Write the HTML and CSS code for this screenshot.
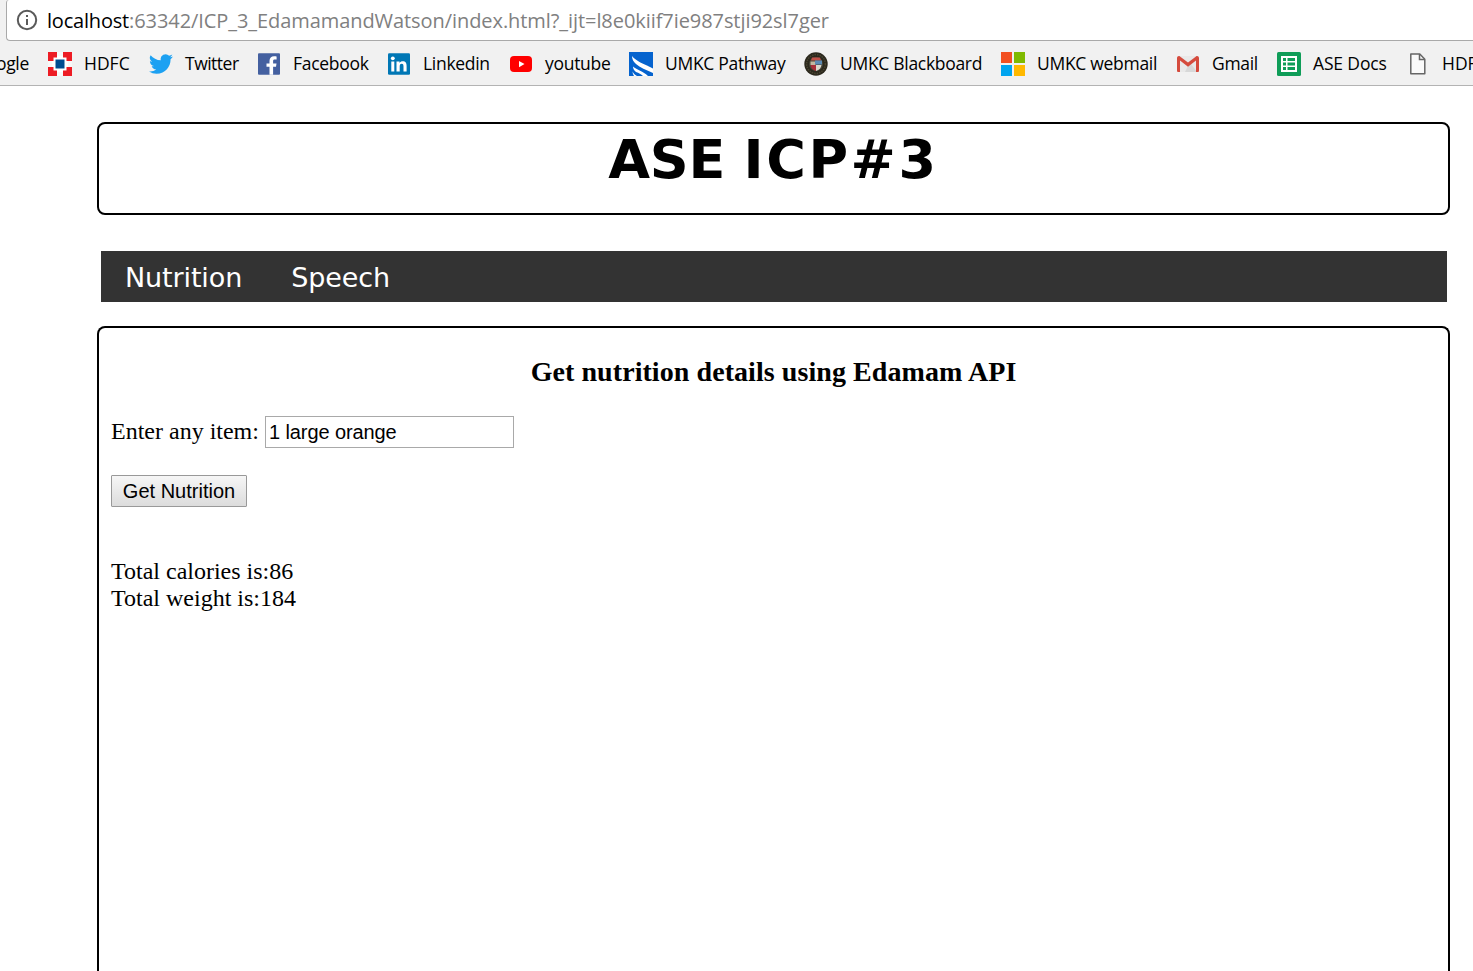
FILE: index.html
```html
<!DOCTYPE html>
<html lang="en">
<head>
<meta charset="utf-8">
<title>ASE ICP#3</title>
<link rel="stylesheet" href="styles.css">
</head>
<body>
<div class="chrome">
  <div class="address">
    <svg class="info" viewBox="0 0 22 22"><circle cx="11" cy="11" r="9.2" fill="none" stroke="#5a5a5a" stroke-width="2"/><path d="M10 10h2v6h-2zM10 6h2v2h-2z" fill="#5a5a5a"/></svg>
    <span class="url"><span class="host">localhost</span>:63342/ICP_3_EdamamandWatson/index.html?_ijt=l8e0kiif7ie987stji92sl7ger</span>
  </div>
  <div class="bookmarks">
    <div class="bm cut"><span class="t-google">Google</span></div>
    <div class="bm"><svg viewBox="0 0 24 24"><path fill="#ed1c24" d="M0 0h24v24H0z"/><path fill="#f8f8f8" d="M9 0h6v4H9zM9 20h6v4H9zM0 9h4v6H0zM20 9h4v6h-4z"/><path fill="#fff" d="M4 4h16v16H4z"/><path fill="#ed1c24" d="M4 4h5v1.500H5.500V9H4zM15 4h5v5h-1.500V5.500H15zM4 15h1.500v3.500H9V20H4zM18.500 15H20v5h-5v-1.500h3.500z"/><path fill="#004c8f" d="M7.500 7.500h9v9h-9z"/></svg><span class="t-hdfc">HDFC</span></div>
    <div class="bm"><svg viewBox="0 0 24 24"><path fill="#1da1f2" d="M23.950 4.570a10 10 0 0 1-2.820.770 4.960 4.960 0 0 0 2.160-2.720c-.950.560-2 .960-3.130 1.190a4.920 4.920 0 0 0-8.380 4.480C7.690 8.100 4.070 6.130 1.640 3.160a4.920 4.920 0 0 0 1.520 6.570 4.900 4.900 0 0 1-2.230-.610v.060c0 2.380 1.700 4.370 3.950 4.820a5 5 0 0 1-2.210.080 4.940 4.940 0 0 0 4.600 3.420A9.870 9.870 0 0 1 0 19.540a13.990 13.990 0 0 0 7.550 2.210c9.050 0 14-7.500 14-13.980 0-.210 0-.420-.020-.630a9.940 9.940 0 0 0 2.420-2.570z"/></svg><span class="t-twitter">Twitter</span></div>
    <div class="bm"><svg viewBox="0 0 24 24"><rect x="1" y="1.300" width="22" height="21.400" rx="1" fill="#4460a0"/><path fill="#fff" d="M12.500 22.700v-8h-3v-3.300h3V9c0-3 1.800-4.700 4.600-4.700 1.300 0 2.200.1 2.500.2v3h-1.700c-1.500 0-1.800.7-1.800 1.700v2.200h3.400l-.5 3.300h-2.900v8z"/></svg><span class="t-facebook">Facebook</span></div>
    <div class="bm"><svg viewBox="0 0 24 24"><rect x="1" y="1.300" width="22" height="21.400" rx="1.200" fill="#0077b5"/><path fill="#fff" d="M4.300 9.500h3v10h-3zM9.500 9.500h3v1.400c.7-1.100 1.800-1.700 3.200-1.700 3 0 3.900 1.900 3.900 4.700v5.600h-3.100v-5c0-1.400-.2-2.700-1.800-2.700s-2 1.300-2 2.600v5.100h-3.200z"/><circle cx="5.800" cy="6.300" r="1.900" fill="#fff"/></svg><span class="t-linkedin">Linkedin</span></div>
    <div class="bm"><svg viewBox="0 0 24 24"><rect x="1" y="4" width="22" height="16" rx="4" fill="red"/><path fill="#fff" d="M10 9l5.500 3-5.500 3.200z"/></svg><span class="t-youtube">youtube</span></div>
    <div class="bm"><svg viewBox="0 0 24 24"><path fill="#0563ce" d="M0 0h24v24H0z"/><path fill="#fff" d="M3 4C6 8 12 11 18 13.500L24 16.500V21C17 18 11 15.500 7 12 4.500 10 3 7 3 4z"/><path fill="#fff" d="M4 14.500c4 3.500 10 4.500 15 9.500h-5c-2-2-4-3-7-4-2-1.500-3-3.500-3-5.500z"/><path fill="#fff" d="M3.500 19.500c1 2 2 3 4.500 4.500H5c-1-1.500-1.500-3-1.500-4.500z"/></svg><span class="t-pathway">UMKC Pathway</span></div>
    <div class="bm"><svg viewBox="0 0 24 24"><circle cx="12" cy="12" r="11.700" fill="#2b281d"/><circle cx="12" cy="12" r="9.400" fill="none" stroke="#484431" stroke-width="1.500" stroke-dasharray="1.500 1"/><circle cx="12" cy="12" r="7" fill="#4a493b"/><path fill="#c05048" d="M8 5.500h8l1 3H7z"/><path fill="#c2b8a0" d="M6.500 9.500h5V13h-5z"/><path fill="#a8303a" d="M6.500 13h5.500v6c-3.500-1-5-3-5.500-6z"/><path fill="#5b8bb5" d="M11 8.500h7v4h-7z"/><path fill="#d9d7cc" d="M12 13h5.500c-.5 3-2 5-5.500 6z"/></svg><span class="t-blackboard">UMKC Blackboard</span></div>
    <div class="bm"><svg viewBox="0 0 24 24"><path fill="#f25022" d="M0 0h11v11H0z"/><path fill="#7fba00" d="M13 0h11v11H13z"/><path fill="#00a4ef" d="M0 13h11v11H0z"/><path fill="#ffb900" d="M13 13h11v11H13z"/></svg><span class="t-webmail">UMKC webmail</span></div>
    <div class="bm"><svg viewBox="0 0 24 24"><path fill="#e9e9e9" d="M3 4h18v16H3z"/><path fill="#d8d8d8" d="M12 14l3-2 6 8H9z"/><path fill="#d54b3d" d="M1 6c0-2 2-2.500 3-1.600l8 6.200 8-6.200c1-.900 3-.4 3 1.600v12.500c0 1-.5 1.500-1.500 1.500H20V8.500l-8 6.300-8-6.300V20H2.500C1.500 20 1 19.500 1 18.500z"/></svg><span class="t-gmail">Gmail</span></div>
    <div class="bm"><svg viewBox="0 0 24 24"><rect width="24" height="24" rx="1.500" fill="#0f9d58"/><path fill="#fff" d="M4 4h16v16H4z"/><path fill="#0f9d58" d="M6 6h3v3H6zM10.500 6H18v3h-7.500zM6 10.500h3v3H6zM10.500 10.500H18v3h-7.500zM6 15h3v3H6zM10.500 15H18v3h-7.500z"/></svg><span class="t-docs">ASE Docs</span></div>
    <div class="bm"><svg viewBox="0 0 24 24"><path fill="#fafafa" stroke="#666" stroke-width="1.500" stroke-linejoin="round" d="M4.800 2h9l5 5.200v14.600h-14z"/><path fill="none" stroke="#666" stroke-width="1.500" d="M13.500 2v5.500h5.300"/></svg><span class="t-hdfc">HDFC</span></div>
  </div>
</div>
<div class="page">
  <header class="banner"><h1>ASE <span class="code">ICP#3</span></h1></header>
  <nav class="menu"><a class="nutrition">Nutrition</a><a class="speech">Speech</a></nav>
  <main class="panel">
    <h3>Get nutrition details using Edamam API</h3>
    <div class="field"><label for="item">Enter any item:</label><input id="item" type="text" value="1 large orange"></div>
    <button type="button">Get Nutrition</button>
    <div class="results"><div class="calories">Total calories is:86</div><div class="weight">Total weight is:184</div></div>
  </main>
</div>
</body>
</html>
```
FILE: styles.css
```css
* { box-sizing: border-box; }
html, body { margin: 0; height: 971px; overflow: hidden; background: #fff; }
body { display: flex; flex-direction: column; color: #000; }
.chrome { flex: none; height: 86px; background: #f1f1f1; border-bottom: 1px solid #b3b3b3; font-family: "Open Sans", sans-serif; overflow: hidden; }
.address { display: flex; align-items: center; height: 41px; margin-left: 6px; padding-left: 9px; background: #fff; border: solid #a9a9a9; border-width: 0 0 1px 1px; border-radius: 3px 0 0 4px; }
.info { width: 22px; height: 22px; margin-right: 9px; }
.url { font-size: 20px; letter-spacing: -0.07px; color: #808080; white-space: nowrap; }
.host { color: #000; letter-spacing: -0.2px; }
.bookmarks { display: grid; grid-template-columns: 48px 101px 108px 130px 122px 120px 175px 197px 175px 101px 129px 101px; height: 46px; align-items: center; }
.bm { display: flex; align-items: center; gap: 12px; white-space: nowrap; font-size: 17.5px; line-height: 24px; letter-spacing: -0.3px; }
.bm span { margin-top: -2px; }
.bm .t-hdfc { letter-spacing: 0; }
.bm .t-twitter { letter-spacing: -0.5px; }
.bm .t-docs { letter-spacing: -0.15px; }
.bm svg { flex: none; width: 24px; height: 24px; }
.cut { justify-content: flex-end; padding-right: 19px; }
.page { flex: 1; min-height: 0; display: flex; flex-direction: column; padding: 36px 23px 0 97px; overflow: hidden; }
.banner { flex: none; height: 93px; border: 2px solid #000; border-radius: 8px; text-align: center; }
h1 { margin: 4px 0 0; font: bold 54px/64px "DejaVu Sans", sans-serif; letter-spacing: -0.3px; }
.code { letter-spacing: 2.6px; }
.menu { flex: none; display: flex; align-items: center; height: 51px; margin: 36px 3px 24px 4px; padding: 2px 0 0 24px; gap: 49px; background: #333; color: #fff; font: 27px/49px "DejaVu Sans", sans-serif; letter-spacing: -0.12px; }
.panel { flex: 1; min-height: 0; border: solid #000; border-width: 2px 2px 0; border-radius: 8px 8px 0 0; padding: 28px 12px 0; font: 24px/27px "Liberation Serif", serif; }
h3 { margin: 0 0 28px; font-size: 28px; line-height: 32px; letter-spacing: 0.07px; text-align: center; }
.field { display: flex; align-items: center; height: 32px; }
label { width: 154px; margin-top: -2px; white-space: nowrap; }
input { width: 249px; height: 32px; border: 1px solid #a9a9a9; border-radius: 0; padding: 0 3px; background: #fff; color: #000; font: 20px "Liberation Sans", sans-serif; letter-spacing: -0.1px; }
button { display: block; width: 136px; height: 32px; margin-top: 27px; padding: 0; border: 1px solid #999; border-radius: 1px; background: linear-gradient(#f6f6f6, #dcdcdc); color: #000; font: 20px "Liberation Sans", sans-serif; }
.results { margin-top: 51px; }
```
